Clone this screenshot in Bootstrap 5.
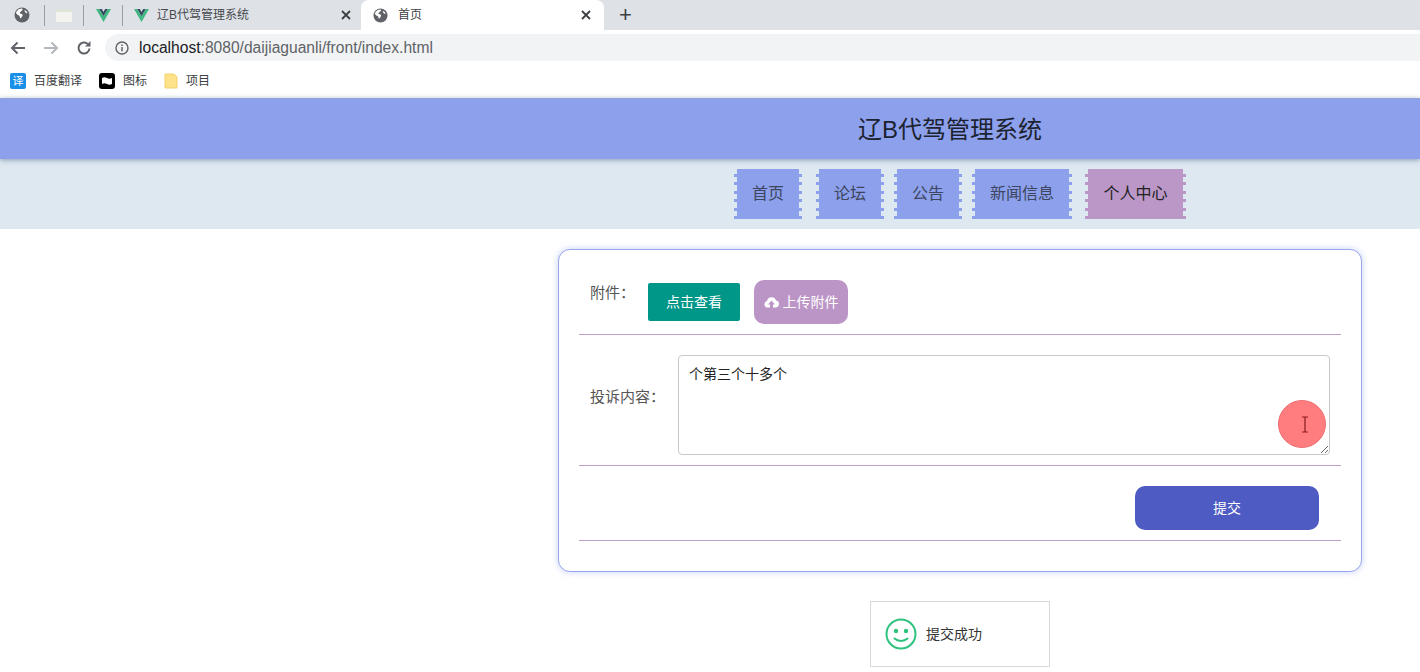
<!doctype html>
<html lang="zh">
<head>
<meta charset="utf-8">
<title>首页</title>
<link href="https://cdn.jsdelivr.net/npm/bootstrap@5.3.0/dist/css/bootstrap.min.css" rel="stylesheet">
<style>
html,body{height:672px;overflow:hidden}
body{font-family:"Liberation Sans","Noto Sans CJK SC",sans-serif;background:#fff;color:#333;font-size:14px}
.tabstrip{height:30px;background:#dee1e6}
.pin-tab{width:38px;height:30px}
.pin-tab.first{width:44px}
.pin-sep{width:1px;height:21px;background:#9a9ea3}
.tab-any{height:30px;font-size:12px;color:#45494e}
.tab-a{width:238px;padding-left:11px}
.tab-b{width:243px;background:#fff;border-radius:8px 8px 0 0;padding-left:12px;color:#3c4043}
.tab-b svg.fav{margin-right:10px}
.tab-x{margin-left:auto}
.tab-a .tab-x{margin-right:10px}
.tab-b .tab-x{margin-right:13px}
.tab-new{font-size:22px;line-height:1;color:#3c4043;margin-left:15px}
.toolbar{height:32px;background:#fff;padding:3px 0 0 1px}
.nav-ico{width:32px;margin-left:1px}
.addr{flex:1;height:27px;background:#f1f3f4;border-radius:14px 0 0 14px;margin-left:5px;padding-left:10px;font-size:15.6px;color:#5f6368}
.addr svg{margin-right:10px}
.addr b{font-weight:400;color:#202124}
.bookmarks{height:36px;padding:2px 0 0 10px;font-size:12px;color:#3c4043;gap:17px}
.bm-fy{width:16px;height:16px;border-radius:2px;background:#1a8fe8;color:#fff;font-size:11px;line-height:16px;text-align:center}
.site-head{height:61px;background:#8ca0ec;color:#1c2230;font-size:24px;padding:1px 0 0 480px;box-shadow:0 1px 5px rgba(70,90,130,.55);position:relative;z-index:1;border-top:1px solid #90a2d8}
.site-nav{height:70px;background:#dde8f0;padding:10px 234px 0 0}
.nav-cell{height:50px;padding:0 18px;font-size:16px;color:#3d4560;line-height:50px;white-space:nowrap;
--c:#8ca0ec;
background:
 linear-gradient(var(--c),var(--c)) center/calc(100% - 6px) 100% no-repeat,
 repeating-linear-gradient(to bottom,transparent 0 5px,var(--c) 5px 8px,transparent 8px 8.5px) left/3px 100% no-repeat,
 repeating-linear-gradient(to bottom,transparent 0 5px,var(--c) 5px 8px,transparent 8px 8.5px) right/3px 100% no-repeat}
.nav-cell.on{--c:#bb97c8;color:#222;padding:0 18.5px}
.gap-14{margin-right:14px}
.gap-13{margin-right:13px}
.gap-10{margin-right:10px}
.form-box{width:804px;height:323px;margin:20px 0 0 558px;border:1px solid #98a6ea;border-radius:12px;box-shadow:0 0 6px rgba(140,160,236,.5);padding:20px 20px 0;background:#fff}
.form-line{border-bottom:1px solid #bf9fc9}
.line-a{height:65px;padding-left:11px}
.line-b{height:131px;padding:20px 11px 10px}
.line-c{height:75px;padding:20px 22px 10px 0}
.lbl{color:#555;font-size:15px;white-space:nowrap}
.line-a .lbl{padding-top:12px}
.line-b .lbl{padding-top:31px}
.btn-view{width:92px;height:38px;background:#009688;color:#fff;border:0;border-radius:2px;font-size:14px;padding:0;margin:13px 0 0 13px}
.btn-view:hover{background:#009688;color:#fff}
.btn-up{width:94px;height:44px;background:#bb95c6;color:#fff;border:0;border-radius:10px;font-size:14px;padding:0;margin:10px 0 0 14px}
.btn-up:hover{background:#bb95c6;color:#fff}
.txt-area{width:652px;height:100px;margin-left:13px;font-size:14px;color:#222;padding:8px 10px;border:1px solid #c9c9c9;border-radius:4px;font-family:"Liberation Sans","Noto Sans CJK SC",sans-serif}
.btn-send{width:184px;height:44px;background:#4d5bc3;color:#fff;border:0;border-radius:10px;font-size:14px;padding:0}
.btn-send:hover{background:#4d5bc3;color:#fff}
.cursor-dot{position:absolute;left:1278px;top:400px;width:48px;height:48px;border-radius:50%;background:#ff7d7f;border:1px solid #ee6f72;padding-left:6px}
.toast-box{position:absolute;left:870px;top:601px;width:180px;height:66px;background:#fff;border:1px solid #d8d8dc;font-size:14px;color:#333;padding-left:14px;gap:9px}
</style>
</head>
<body>
<div class="tabstrip d-flex align-items-center">
  <svg class="d-none"><defs>
    <symbol id="globe" viewBox="0 0 16 16"><circle cx="8" cy="8" r="7.5" fill="#5f6368"/><path d="M3 4c1.500-1.800 3-2.500 5-2.500 1 .5.500 1.500 0 2-1 .5-1 1-1.500 1.500-.8.200-1 1-.5 1.500 1 .2 2 .2 2.500 1 .5 1-.5 2-1 3-.5.800-1 1-1.500.5-.3-1-.2-2-1-2.500C3.500 8 2.500 7 2 6c0-.7.500-1.300 1-2z" fill="#fff"/><path d="M10.500 3c1 .3 2.500 1.700 3 3-.8.500-1.700 0-2-.5-.5-.5-1.200-1.300-1-2.500z" fill="#fff"/></symbol>
    <symbol id="vue" viewBox="0 0 16 16"><path d="M0 1h3.600L8 8.600 12.400 1H16L8 15z" fill="#41b883"/><path d="M3.600 1h2.600L8 4.200 9.800 1h2.600L8 8.600z" fill="#35495e"/></symbol>
    <symbol id="closex" viewBox="0 0 10 10"><path d="M1 1l8 8M9 1l-8 8" stroke="#3c4043" stroke-width="1.800" fill="none"/></symbol>
  </defs></svg>
  <div class="pin-tab first d-flex align-items-center justify-content-center"><svg width="16" height="16"><use href="#globe"/></svg></div>
  <span class="pin-sep"></span>
  <div class="pin-tab d-flex align-items-center justify-content-center"><svg width="16" height="13" viewBox="0 0 16 13"><rect width="16" height="13" rx="1" fill="#f3f3ef"/><rect width="16" height="3" fill="#dfe5d9"/></svg></div>
  <span class="pin-sep"></span>
  <div class="pin-tab d-flex align-items-center justify-content-center"><svg width="15" height="15"><use href="#vue"/></svg></div>
  <span class="pin-sep"></span>
  <div class="tab-any tab-a d-flex align-items-center"><svg width="15" height="15" class="me-2"><use href="#vue"/></svg><span>辽B代驾管理系统</span><svg class="tab-x" width="10" height="10"><use href="#closex"/></svg></div>
  <div class="tab-any tab-b d-flex align-items-center"><svg width="15" height="15" class="fav"><use href="#globe"/></svg><span>首页</span><svg class="tab-x" width="10" height="10"><use href="#closex"/></svg></div>
  <span class="tab-new">+</span>
</div>
<div class="toolbar d-flex align-items-center">
  <div class="nav-ico d-flex justify-content-center"><svg width="16" height="14" viewBox="0 0 16 14"><path d="M15 7H2M7.500 1.500 2 7l5.500 5.500" fill="none" stroke="#5f6368" stroke-width="2"/></svg></div>
  <div class="nav-ico d-flex justify-content-center"><svg width="16" height="14" viewBox="0 0 16 14"><path d="M1 7h13M8.500 1.500 14 7l-5.500 5.500" fill="none" stroke="#b4b7bb" stroke-width="2"/></svg></div>
  <div class="nav-ico d-flex justify-content-center"><svg width="16" height="16" viewBox="0 0 16 16"><path d="M13.500 8.500a5.500 5.500 0 1 1-1.600-4.400" fill="none" stroke="#5f6368" stroke-width="2"/><path d="M14.500 1v5.500H9z" fill="#5f6368"/></svg></div>
  <div class="addr d-flex align-items-center"><svg width="14" height="14" viewBox="0 0 14 14"><circle cx="7" cy="7" r="6" fill="none" stroke="#5f6368" stroke-width="1.400"/><path d="M7 6v4.200M7 3.500v1.500" stroke="#5f6368" stroke-width="1.500"/></svg><span><b>localhost</b>:8080/daijiaguanli/front/index.html</span></div>
</div>
<div class="bookmarks d-flex align-items-center">
  <div class="d-flex align-items-center gap-2"><span class="bm-fy">译</span><span>百度翻译</span></div>
  <div class="d-flex align-items-center gap-2"><svg width="16" height="16" viewBox="0 0 16 16"><rect width="16" height="16" rx="3" fill="#000"/><path d="M3 5c2-1 3-1 5 0s3 1 5 0v6c-2 1-3 1-5 0s-3-1-5 0z" fill="#fff"/></svg><span>图标</span></div>
  <div class="d-flex align-items-center gap-2"><svg width="14" height="16" viewBox="0 0 14 16"><path d="M1 1h9l3 3v11H1z" fill="#fde28a" stroke="#f3d26c"/></svg><span>项目</span></div>
</div>
<header class="site-head d-flex align-items-center justify-content-center">辽B代驾管理系统</header>
<nav class="site-nav d-flex justify-content-end">
  <a class="nav-cell gap-14 text-decoration-none">首页</a>
  <a class="nav-cell gap-10 text-decoration-none">论坛</a>
  <a class="nav-cell gap-10 text-decoration-none">公告</a>
  <a class="nav-cell gap-13 text-decoration-none">新闻信息</a>
  <a class="nav-cell on text-decoration-none">个人中心</a>
</nav>
<main class="form-box">
  <div class="form-line line-a d-flex align-items-start">
    <label class="lbl">附件：</label>
    <button class="btn btn-view" type="button">点击查看</button>
    <button class="btn btn-up d-flex align-items-center justify-content-center" type="button"><svg width="15" height="12" viewBox="0 0 15 12" class="me-1"><path fill="#fff" fill-rule="evenodd" d="M3.500 11.500A3.300 3.300 0 0 1 3 5 4.700 4.700 0 0 1 12 4.400a3.600 3.600 0 0 1 0 7.100H9V8.500h2L7.500 4.500 4 8.500h2v3z"/></svg>上传附件</button>
  </div>
  <div class="form-line line-b d-flex align-items-start">
    <label class="lbl">投诉内容：</label>
    <textarea class="form-control txt-area flex-shrink-0">个第三个十多个</textarea>
  </div>
  <div class="form-line line-c d-flex justify-content-end align-items-start">
    <button class="btn btn-send" type="button">提交</button>
  </div>
</main>
<div class="cursor-dot d-flex align-items-center justify-content-center"><svg width="10" height="17" viewBox="0 0 10 17"><path d="M2 1h6M2 16h6M5 1v15" fill="none" stroke="#8b1a1e" stroke-width="1.200"/></svg></div>
<div class="toast-box d-flex align-items-center">
  <svg width="32" height="32" viewBox="0 0 32 32"><circle cx="16" cy="16" r="14.500" fill="none" stroke="#2fc27f" stroke-width="2"/><circle cx="11" cy="13" r="2.200" fill="#2fc27f"/><circle cx="21" cy="13" r="2.200" fill="#2fc27f"/><path d="M9.500 20.500c3.500 3.200 9.500 3.200 13 0" fill="none" stroke="#2fc27f" stroke-width="2" stroke-linecap="round"/></svg>
  <span>提交成功</span>
</div>
</body>
</html>
